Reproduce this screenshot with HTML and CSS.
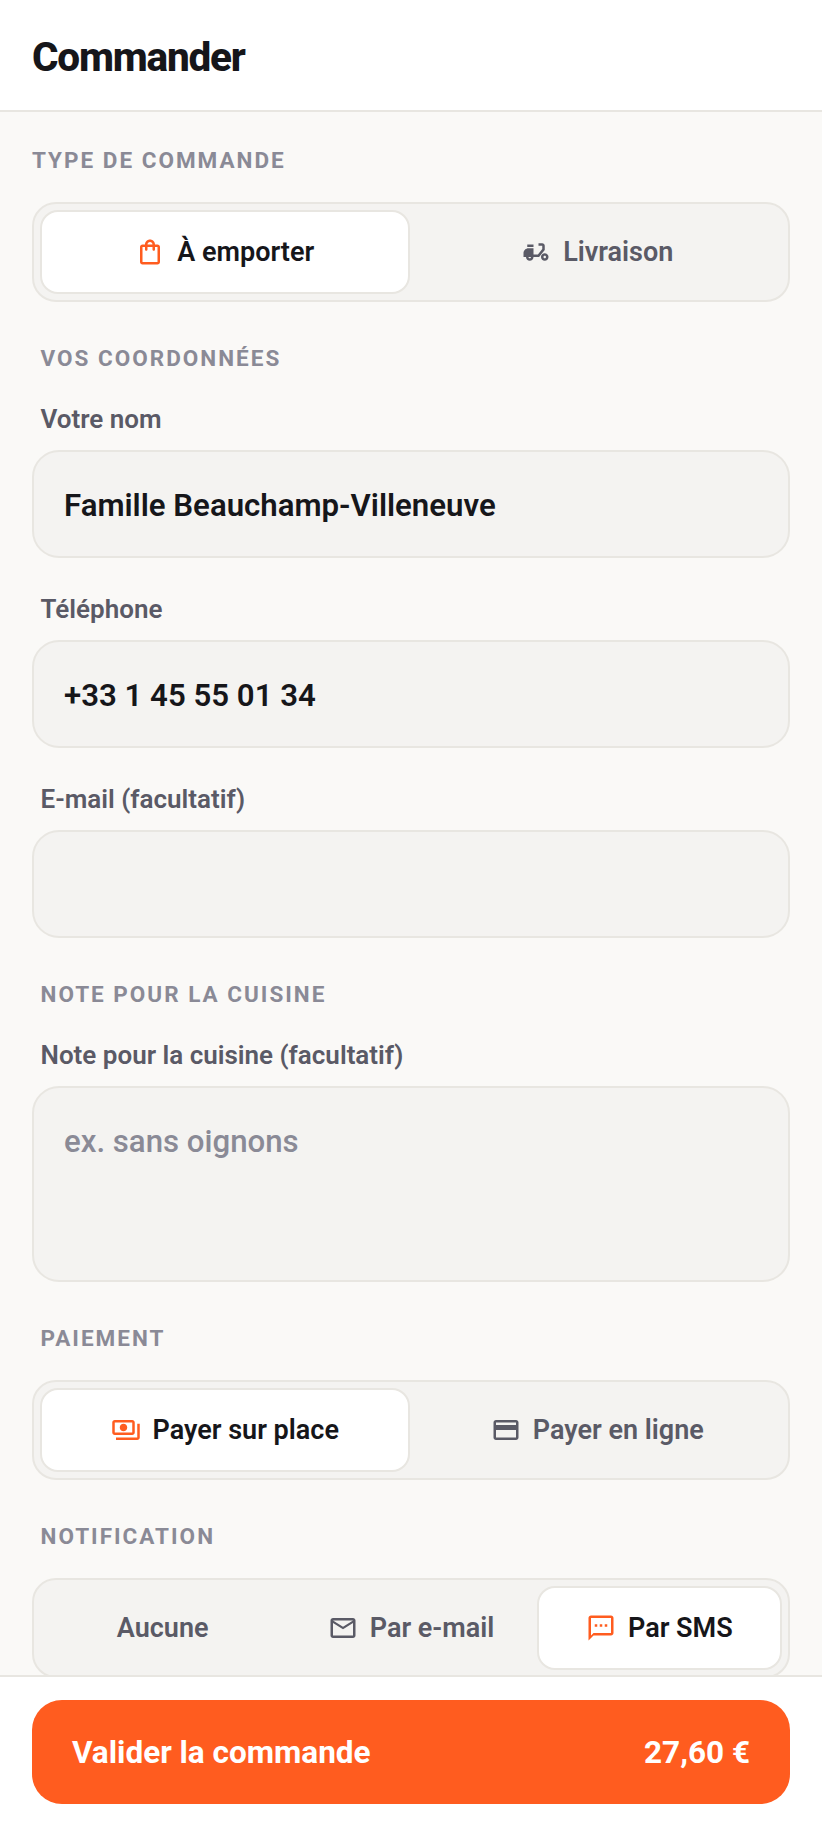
FILE: index.html
```html
<!DOCTYPE html>
<html lang="fr">
<head>
    <meta charset="UTF-8">
    <meta name="viewport" content="width=device-width, initial-scale=1.0">
    <title>Commander</title>
    <link rel="stylesheet" href="styles.css">
</head>
<body>

    <header class="topbar">
        <h1>Commander</h1>
    </header>

    <main class="content">
        <!-- Type de commande -->
        <h2 class="section-title first">Type de commande</h2>
        <div class="segment two">
            <button class="seg-item active">
                <svg class="icon" viewBox="0 0 24 24"><path d="M18 6h-2c0-2.21-1.79-4-4-4S8 3.79 8 6H6c-1.1 0-2 .9-2 2v12c0 1.1.9 2 2 2h12c1.1 0 2-.9 2-2V8c0-1.1-.9-2-2-2zm-6-2c1.1 0 2 .9 2 2h-4c0-1.1.9-2 2-2zm6 16H6V8h2v2c0 .55.45 1 1 1s1-.45 1-1V8h4v2c0 .55.45 1 1 1s1-.45 1-1V8h2v12z"/></svg>
                À emporter
            </button>
            <button class="seg-item">
                <svg class="icon" viewBox="0 0 24 24"><path d="M19 7c0-1.1-.9-2-2-2h-3v2h3v2.65L13.52 14H10V9H6c-2.21 0-4 1.79-4 4v3h2c0 1.66 1.34 3 3 3s3-1.34 3-3h4.48L19 10.35V7zM7 17c-.55 0-1-.45-1-1h2c0 .55-.45 1-1 1z"/><path d="M5 6h5v2H5z"/><path d="M19 13c-1.66 0-3 1.34-3 3s1.34 3 3 3 3-1.34 3-3-1.34-3-3-3zm0 4c-.55 0-1-.45-1-1s.45-1 1-1 1 .45 1 1-.45 1-1 1z"/></svg>
                Livraison
            </button>
        </div>

        <!-- Coordonnées -->
        <h2 class="section-title">Vos coordonnées</h2>
        <div class="field">
            <label for="nom">Votre nom</label>
            <input type="text" id="nom" value="Famille Beauchamp-Villeneuve">
        </div>
        <div class="field">
            <label for="tel">Téléphone</label>
            <input type="text" id="tel" value="+33 1 45 55 01 34">
        </div>
        <div class="field">
            <label for="mail">E-mail (facultatif)</label>
            <input type="text" id="mail">
        </div>

        <!-- Note -->
        <h2 class="section-title">Note pour la cuisine</h2>
        <div class="field">
            <label for="note">Note pour la cuisine (facultatif)</label>
            <textarea id="note" placeholder="ex. sans oignons"></textarea>
        </div>

        <!-- Paiement -->
        <h2 class="section-title">Paiement</h2>
        <div class="segment two">
            <button class="seg-item active">
                <svg class="icon" viewBox="0 0 24 24"><path d="M19 14V6c0-1.1-.9-2-2-2H3c-1.1 0-2 .9-2 2v8c0 1.1.9 2 2 2h14c1.1 0 2-.9 2-2zm-2 0H3V6h14v8zm-7-7c-1.66 0-3 1.34-3 3s1.34 3 3 3 3-1.34 3-3-1.34-3-3-3zm13 0v11c0 1.1-.9 2-2 2H4v-2h17V7h2z"/></svg>
                Payer sur place
            </button>
            <button class="seg-item">
                <svg class="icon" viewBox="0 0 24 24"><path d="M20 4H4c-1.11 0-1.99.89-1.99 2L2 18c0 1.11.89 2 2 2h16c1.11 0 2-.89 2-2V6c0-1.11-.89-2-2-2zm0 14H4v-6h16v6zm0-10H4V6h16v2z"/></svg>
                Payer en ligne
            </button>
        </div>

        <!-- Notification -->
        <h2 class="section-title">Notification</h2>
        <div class="segment three">
            <button class="seg-item">Aucune</button>
            <button class="seg-item">
                <svg class="icon" viewBox="0 0 24 24"><path d="M20 4H4c-1.1 0-1.99.9-1.99 2L2 18c0 1.1.9 2 2 2h16c1.1 0 2-.9 2-2V6c0-1.1-.9-2-2-2zm0 14H4V8l8 5 8-5v10zm-8-7L4 6h16l-8 5z"/></svg>
                Par e-mail
            </button>
            <button class="seg-item active">
                <svg class="icon" viewBox="0 0 24 24"><path d="M20 2H4c-1.1 0-2 .9-2 2v18l4-4h14c1.1 0 2-.9 2-2V4c0-1.1-.9-2-2-2zm0 14H6l-2 2V4h16v12z"/><path d="M7 9h2v2H7zm4 0h2v2h-2zm4 0h2v2h-2z"/></svg>
                Par SMS
            </button>
        </div>
    </main>

    <footer class="bottombar">
        <button class="submit">
            <span>Valider la commande</span>
            <span>27,60 €</span>
        </button>
    </footer>

</body>
</html>
```

FILE: styles.css
```css
* {
    box-sizing: border-box;
}
body {
    display: flex;
    flex-direction: column;
    height: 1828px;
    margin: 0;
    overflow: hidden;
    font-family: Roboto, "Liberation Sans", sans-serif;
    color: #16161a;
    background-color: #faf9f7;
}
.topbar {
    flex-shrink: 0;
    height: 112px;
    padding: 3px 0 0 32px;
    background-color: #fff;
    border-bottom: 2px solid #e8e6e1;
}
h1 {
    margin: 0;
    font-size: 40.5px;
    line-height: 108px;
    font-weight: 800;
    letter-spacing: -1.2px;
}
.content {
    flex: 1;
    min-height: 0;
    overflow: hidden;
    padding: 0 32px;
}
.section-title {
    margin: 43px 0 29px;
    padding-left: 8.5px;
    font-size: 22.5px;
    line-height: 26px;
    font-weight: 700;
    letter-spacing: 2px;
    text-transform: uppercase;
    color: #8a8a96;
}
.section-title.first {
    margin-top: 35px;
    padding-left: 0;
}
.segment {
    display: grid;
    gap: 3px;
    height: 100px;
    padding: 6px;
    background-color: #f4f3f1;
    border: 2px solid #e8e6e1;
    border-radius: 24px;
}
.segment.two {
    grid-template-columns: 1fr 1fr;
}
.segment.three {
    grid-template-columns: 1fr 1fr 1fr;
}
.seg-item {
    display: flex;
    align-items: center;
    justify-content: center;
    gap: 12px;
    padding: 0;
    font-family: inherit;
    font-size: 27px;
    font-weight: 600;
    color: #5a5a66;
    background: none;
    border: 2px solid transparent;
    border-radius: 18px;
}
.seg-item.active {
    color: #16161a;
    background-color: #fff;
    border-color: #e8e6e1;
}
.icon {
    width: 30px;
    height: 30px;
    fill: currentColor;
}
.seg-item.active .icon {
    fill: #ff5c1f;
}
.field {
    margin-bottom: 36px;
}
.section-title + .field {
    margin-top: 33px;
}
label {
    display: block;
    margin-bottom: 16px;
    padding-left: 8.5px;
    font-size: 26px;
    line-height: 30px;
    font-weight: 600;
    color: #5a5a66;
}
input,
textarea {
    display: block;
    width: 100%;
    padding: 2px 30px 0;
    font-family: inherit;
    font-size: 31.2px;
    font-weight: 600;
    color: #16161a;
    background-color: #f4f3f1;
    border: 2px solid #e8e6e1;
    border-radius: 27px;
    outline: none;
}
input {
    height: 108px;
}
textarea {
    height: 196px;
    padding-top: 35px;
    resize: none;
    font-weight: 500;
}
textarea::placeholder {
    color: #8a8a96;
}
.bottombar {
    flex-shrink: 0;
    height: 153px;
    padding: 23px 32px 0;
    background-color: #fff;
    border-top: 2px solid #e8e6e1;
}
.submit {
    display: flex;
    align-items: center;
    justify-content: space-between;
    width: 100%;
    height: 104px;
    padding: 0 40px;
    font-family: inherit;
    font-size: 31.5px;
    font-weight: 700;
    color: #fff;
    background-color: #ff5c1f;
    border: none;
    border-radius: 30px;
}
```
